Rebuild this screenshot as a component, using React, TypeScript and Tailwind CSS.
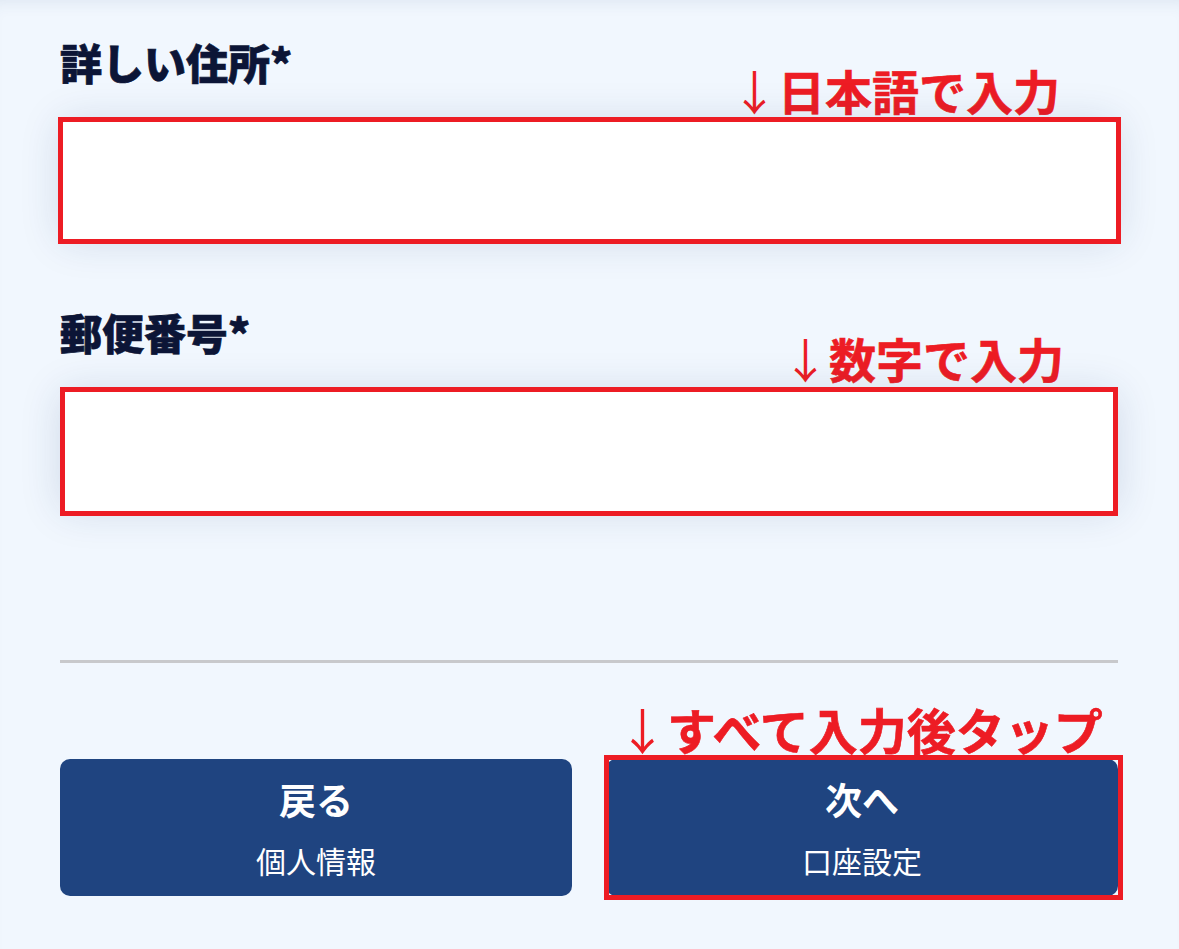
import type { ReactNode } from "react";

const JP = "font-['Noto_Sans_CJK_JP','Noto_Sans',sans-serif]";

function Note({ children, className }: { children: ReactNode; className: string }) {
  return (
    <div className={`${JP} pointer-events-none absolute flex items-start whitespace-nowrap leading-none text-[#ed1c24] ${className}`}>
      <span className="font-normal">↓</span>
      <span className="font-bold [-webkit-text-stroke:0.6px_#ed1c24]">{children}</span>
    </div>
  );
}

function Field({
  label,
  note,
  noteClass,
  frameClass,
  className,
}: {
  label: string;
  note: string;
  noteClass: string;
  frameClass: string;
  className?: string;
}) {
  return (
    <div className={`relative ${className ?? ""}`}>
      <label
        className={`${JP} block h-[42px] text-[42px] font-black leading-none text-[#0c1536] [-webkit-text-stroke:0.7px_#0c1536]`}
      >
        {label}*
      </label>
      <Note className={`text-[47px] ${noteClass}`}>{note}</Note>
      <div className="relative mt-[38px]">
        <input
          type="text"
          className="block h-[120px] w-full rounded-lg bg-white px-5 text-[28px] outline-none shadow-[0_0_40px_rgba(30,55,110,0.15)]"
        />
        {/* annotation frame */}
        <div className={`pointer-events-none absolute border-[5px] border-[#ed1c24] ${frameClass}`} />
      </div>
    </div>
  );
}

function NavButton({ title, sub }: { title: string; sub: string }) {
  return (
    <button
      type="button"
      className={`${JP} flex h-[137px] w-full flex-col items-center rounded-[10px] bg-[#1f4480] pt-[22px] text-white`}
    >
      <span className="text-[37px] font-bold leading-none">{title}</span>
      <span className="mt-[27px] text-[30px] font-normal leading-none">{sub}</span>
    </button>
  );
}

export default function App() {
  return (
    <div className="min-h-screen bg-[#f1f7fe] shadow-[inset_0_14px_18px_-14px_rgba(40,70,120,0.12)]">
      <div className="pl-[60px] pr-[61px] pt-[41px] pb-[52px]">
        <Field
          label="詳しい住所"
          note="日本語で入力"
          noteClass="left-[671px] top-[25px]"
          frameClass="-left-[2px] -right-[3px] -top-[4px] -bottom-[3px]"
        />
        <Field
          className="mt-[70px]"
          label="郵便番号"
          note="数字で入力"
          noteClass="left-[722px] top-[23px]"
          frameClass="left-0 right-0 -top-[4px] bottom-[-5px]"
        />

        <div className="mt-[149px] h-[3px] bg-[#c8c9cc]" />

        <div className="mt-[96px] grid grid-cols-2 gap-[34px]">
          <NavButton title="戻る" sub="個人情報" />

          <div className="relative">
            <Note className="left-[12px] -top-[55px] text-[49px]">すべて入力後タップ</Note>
            <NavButton title="次へ" sub="口座設定" />
            <div className="pointer-events-none absolute -left-[2px] -right-[5px] -top-[4px] -bottom-[4px] border-[5px] border-[#ed1c24]" />
          </div>
        </div>
      </div>
    </div>
  );
}
